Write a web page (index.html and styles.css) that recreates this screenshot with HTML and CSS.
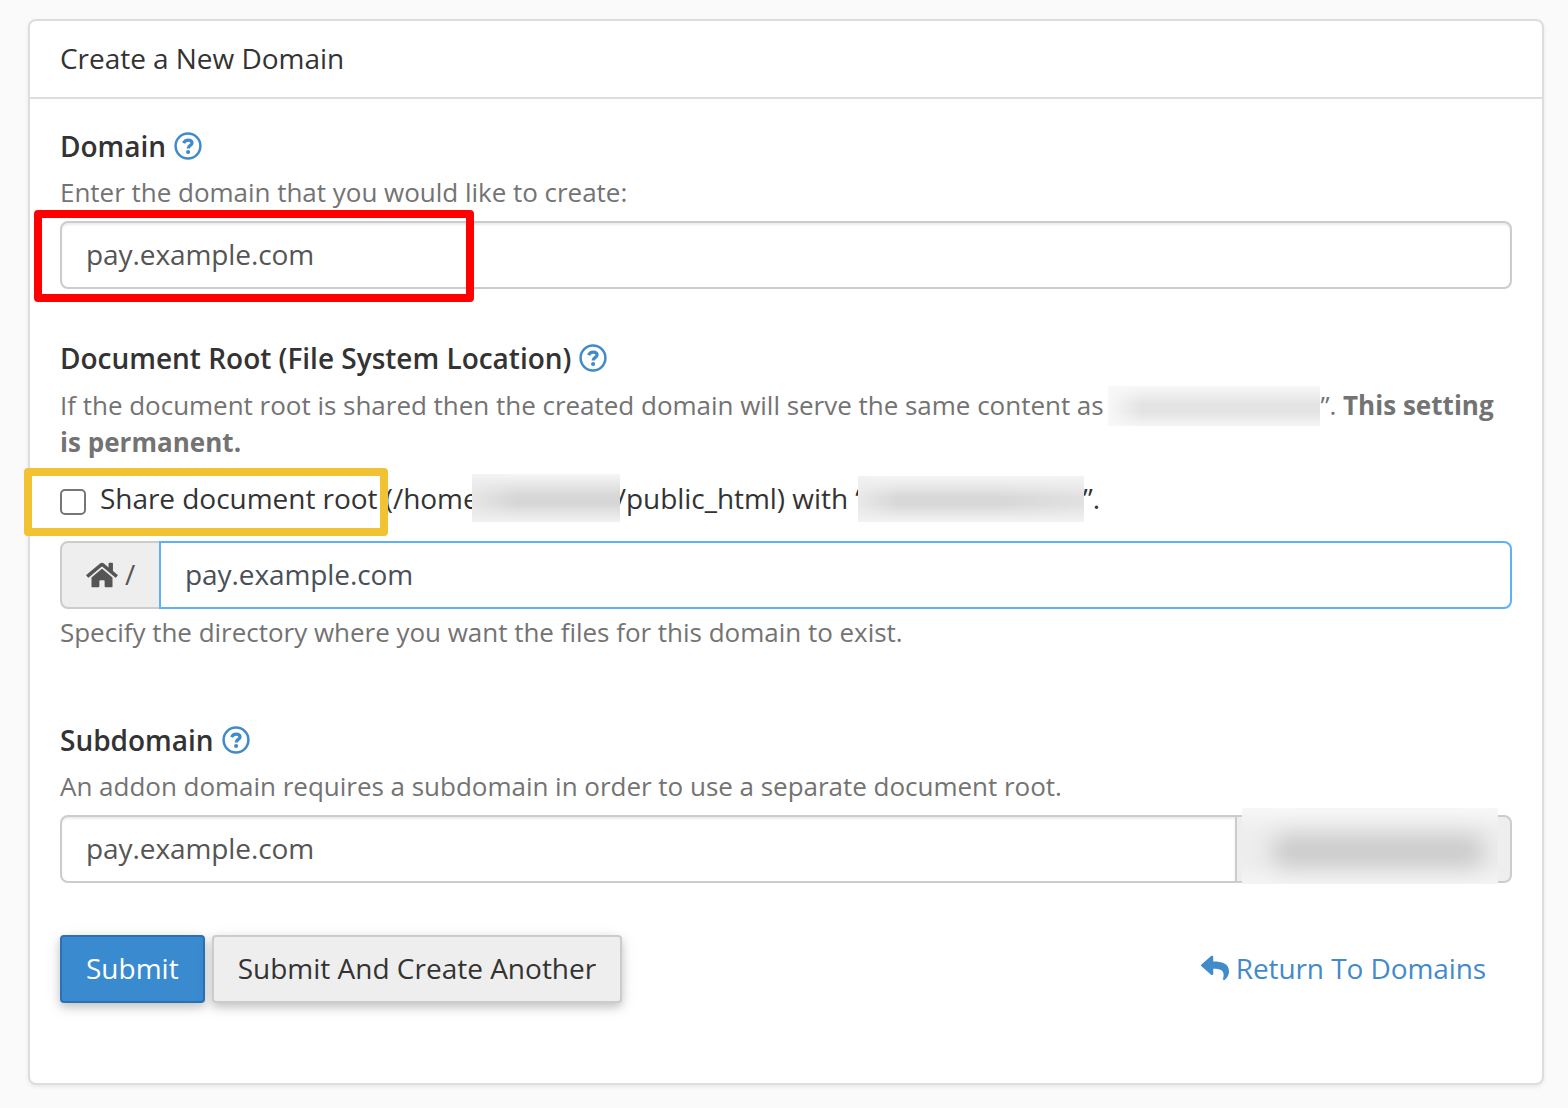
FILE: index.html
```html
<!DOCTYPE html>
<html lang="en">
<head>
<meta charset="utf-8">
<title>Create a New Domain</title>
<link rel="stylesheet" href="styles.css">
</head>
<body>
<svg class="defs" width="0" height="0" aria-hidden="true">
  <symbol id="help" viewBox="0 0 28 28">
    <circle cx="14" cy="14" r="12.4" fill="none" stroke="currentColor" stroke-width="2.5"/>
    <path d="M9.6 11.100C10.500 9.200 12 8.200 14.200 8.200C16.600 8.200 18 9.400 18 11.100C18 13.500 14.200 13.500 14.200 16.600" fill="none" stroke="currentColor" stroke-width="3.300"/>
    <circle cx="14.1" cy="20" r="2.1" fill="currentColor"/>
  </symbol>
</svg>
<main class="panel">
  <header class="panel-heading">Create a New Domain</header>
  <form class="panel-body">
    <section class="group group-domain">
      <label class="title">Domain <svg class="help-icon"><use href="#help"/></svg></label>
      <p class="help">Enter the domain that you would like to create:</p>
      <div class="control"><div class="field">pay.example.com</div><i class="mark mark-red"></i></div>
    </section>
    <section class="group group-root">
      <label class="title">Document Root (File System Location) <svg class="help-icon"><use href="#help"/></svg></label>
      <p class="help">If the document root is shared then the created domain will serve the same content as <span class="redact redact-a"></span>”. <strong>This setting</strong> <strong>is permanent.</strong></p>
      <div class="check">
        <span class="box"></span><span class="check-text">Share document root (/home<span class="redact redact-b"></span>/public_html) with “<span class="redact redact-c"></span>”.</span>
        <i class="mark mark-yellow"></i>
      </div>
      <div class="control">
        <div class="addon addon-left"><svg class="home" viewBox="0 0 576 512"><path fill="currentColor" d="M280.400 148.300L96 300.100V464a16 16 0 0 0 16 16l112-.3a16 16 0 0 0 16-16V368a16 16 0 0 1 16-16h64a16 16 0 0 1 16 16v95.600a16 16 0 0 0 16 16.100L464 480a16 16 0 0 0 16-16V300L295.700 148.300a12.200 12.200 0 0 0-15.300 0zM571.600 251.500L488 182.600V44a12 12 0 0 0-12-12h-56a12 12 0 0 0-12 12v72.600L318.500 43a48 48 0 0 0-61 0L4.300 251.500a12 12 0 0 0-1.600 16.900l25.500 31a12 12 0 0 0 16.900 1.600l235.200-193.700a12.200 12.200 0 0 1 15.300 0L530.900 301a12 12 0 0 0 16.900-1.600l25.500-31a12 12 0 0 0-1.700-16.900z"/></svg><span class="slash">/</span></div>
        <div class="field field-active">pay.example.com</div>
      </div>
      <p class="help help-after">Specify the directory where you want the files for this domain to exist.</p>
    </section>
    <section class="group">
      <label class="title">Subdomain <svg class="help-icon"><use href="#help"/></svg></label>
      <p class="help">An addon domain requires a subdomain in order to use a separate document root.</p>
      <div class="control">
        <div class="field field-first">pay.example.com</div>
        <div class="addon addon-right"><span class="redact redact-d"></span></div>
      </div>
    </section>
    <footer class="actions">
      <button type="button" class="btn btn-primary">Submit</button>
      <button type="button" class="btn">Submit And Create Another</button>
      <a class="return"><svg class="reply" viewBox="0 0 512 512"><path fill="currentColor" d="M8.300 189.800L184.300 37.800C199.700 24.500 224 35.300 224 56v80.100C384.600 137.900 512 170.100 512 322.300c0 61.400-39.600 122.300-83.300 154.100-13.700 9.900-33.100-2.500-28.100-18.600C446 312.600 379.100 274.100 224 271.900V360c0 20.700-24.300 31.500-39.700 18.200l-176-152c-11.100-9.600-11.100-26.800 0-36.300z"/></svg>Return To Domains</a>
    </footer>
  </form>
</main>
</body>
</html>
```

FILE: styles.css
```css
* { box-sizing: border-box; }
body {
  margin: 0;
  padding: 19px 24px 23px 28px;
  height: 1108px;
  background: #fafafa;
  color: #333;
  font: 28px/40px "Open Sans", sans-serif;
  letter-spacing: -.04px;
}
.defs { position: absolute; }
.panel {
  height: 1066px;
  background: #fff;
  border: 2px solid #ddd;
  border-radius: 8px;
  box-shadow: 0 2px 4px rgba(0, 0, 0, .07);
}
.panel-heading { padding: 17px 30px 19px; border-bottom: 2px solid #ddd; }
.panel-body { padding: 27px 30px 0; }
.group { margin-bottom: 52px; }
.group-domain { margin-bottom: 49px; }
.group-root { margin-bottom: 69px; }
.title { display: flex; align-items: center; gap: 8px; font-weight: 600; letter-spacing: -.01px; }
.help-icon { width: 28px; height: 28px; color: #428bca; }
.help { margin: 8px 0 10px; color: #737373; font-size: 26px; line-height: 37px; letter-spacing: -.02px; }
.help strong { letter-spacing: .03px; }
.group-root .help { margin-top: 9px; }
.group-root .help-after { margin: 5px 0 0; }
.control { position: relative; display: flex; height: 68px; }
.field {
  flex: 1;
  padding: 11px 24px;
  background: #fff;
  color: #555;
  border: 2px solid #ccc;
  border-radius: 8px;
  box-shadow: inset 0 2px 2px rgba(0, 0, 0, .075);
  letter-spacing: -.08px;
}
.field-active {
  margin-left: -2px;
  color: #495057;
  border-color: #5fb0fa;
  border-radius: 0 8px 8px 0;
  box-shadow: none;
}
.field-first { border-radius: 8px 0 0 8px; }
.addon {
  display: flex;
  align-items: center;
  background: #eee;
  border: 2px solid #ccc;
  color: #555;
}
.addon-left { width: 101px; padding-left: 24px; gap: 7px; border-radius: 8px 0 0 8px; }
.addon-right { position: relative; width: 275px; border-left: 0; border-radius: 0 8px 8px 0; }
.home { width: 32px; height: 28px; margin-bottom: 1px; }
.slash { margin-bottom: 2px; }
.check { position: relative; display: flex; align-items: center; height: 40px; margin: 18px 0 22px; }
.box {
  width: 26px;
  height: 26px;
  margin: 5px 14px 0 0;
  border: 2px solid #767676;
  border-radius: 5px;
  background: #fff;
}
.check-text { margin-bottom: 2px; white-space: nowrap; }
.redact { position: relative; display: inline-block; overflow: hidden; z-index: 1; }
.redact-a {
  width: 212px; height: 40px; margin: -10px 0 -10px -2px; vertical-align: -1px;
  background: linear-gradient(90deg, #f8f8f8, rgba(248, 248, 248, 0) 16%), linear-gradient(#f8f8f8, #eee 22%, #e3e3e3 45%, #e3e3e3 65%, #ededed 85%, #f5f5f5);
}
.redact-b {
  width: 148px; height: 48px; margin: -10px -4px -10px -7px; vertical-align: -3px;
  background: linear-gradient(90deg, rgba(240, 240, 240, .6), rgba(240, 240, 240, 0) 30%), linear-gradient(#f6f6f6, #e6e6e6 22%, #d7d7d7 46%, #d6d6d6 62%, #e6e6e6 84%, #f2f2f2);
}
.redact-c {
  width: 226px; height: 46px; margin: -10px -1px -10px -7px; vertical-align: -3px;
  background: linear-gradient(90deg, rgba(240, 240, 240, .7), rgba(240, 240, 240, 0) 18% 60%, rgba(240, 240, 240, .4)), linear-gradient(#f6f6f6, #e8e8e8 22%, #d7d7d7 46%, #d7d7d7 62%, #e8e8e8 84%, #f4f4f4);
}
.redact-d { position: absolute; left: 5px; top: -9px; width: 256px; height: 76px; background: linear-gradient(#f7f7f7, #eee 30%, #ededed 70%, #f4f4f4); }
.redact-d::before { content: ""; position: absolute; left: 30px; top: 27px; width: 212px; height: 32px; border-radius: 14px; background: #c9c9c9; filter: blur(11px); }
.mark { position: absolute; z-index: 2; border-radius: 4px; }
.mark-red { left: -26px; top: -11px; width: 440px; height: 92px; border: 8px solid #f00; }
.mark-yellow { left: -36px; top: -11px; width: 364px; height: 68px; border: 8px solid #f1c232; }
.actions { display: flex; gap: 7px; height: 68px; }
.btn {
  padding: 0 24px 2px;
  font: inherit;
  color: #333;
  background: #eee;
  border: 2px solid #ccc;
  border-radius: 4px;
  box-shadow: 0 4px 10px rgba(0, 0, 0, .2), 0 4px 20px rgba(0, 0, 0, .07);
}
.btn-primary { color: #fff; background: #3a8ad0; border-color: #2a72b5; }
.return { display: flex; align-items: center; gap: 7px; margin: 0 26px 0 auto; padding-bottom: 2px; color: #428bca; letter-spacing: -.09px; }
.reply { width: 28px; height: 28px; }
```
